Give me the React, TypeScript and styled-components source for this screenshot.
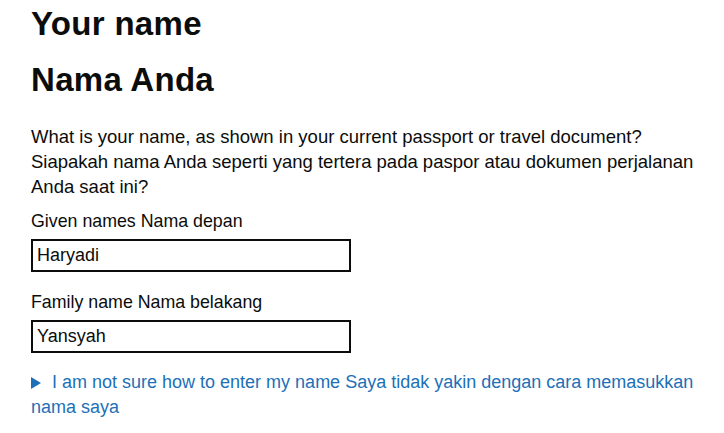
import styled, { createGlobalStyle } from 'styled-components';

const GlobalStyle = createGlobalStyle`
  html, body {
    margin: 0;
    padding: 0;
    background: #ffffff;
  }
  body {
    font-family: "Liberation Sans", Arial, sans-serif;
    color: #0b0c0c;
  }
`;

const Page = styled.main`
  padding: 4px 20px 20px 31px;
`;

const Heading = styled.h1`
  margin: 0 0 16px;
  font-size: 33px;
  line-height: 40px;
  font-weight: 700;
  letter-spacing: 0.3px;
`;

const Hint = styled.p`
  margin: 24px 0 10px;
  font-size: 18.5px;
  line-height: 25px;
`;

const Field = styled.div`
  display: flex;
  flex-direction: column;
  gap: 5px;

  & + & {
    margin-top: 18px;
  }
`;

const Label = styled.label`
  font-size: 17.8px;
  line-height: 25px;
`;

const Input = styled.input`
  box-sizing: border-box;
  width: 320px;
  height: 33px;
  margin: 0;
  padding: 0 4px;
  border: 2px solid #0b0c0c;
  border-radius: 0;
  font-family: "Liberation Sans", Arial, sans-serif;
  font-size: 18px;
  color: #0b0c0c;
  background: #ffffff;
  outline: none;
`;

const Details = styled.details`
  margin-top: 17px;
  font-size: 18px;
  line-height: 25px;
`;

const Summary = styled.summary`
  display: block;
  color: #1d70b8;
  cursor: pointer;
  list-style: none;
  &::-webkit-details-marker {
    display: none;
  }
`;

const Arrow = styled.span`
  display: inline-block;
  width: 0;
  height: 0;
  margin: 0 11px 0 0;
  border-style: solid;
  border-width: 6px 0 6px 10px;
  border-color: transparent transparent transparent #1d70b8;
  vertical-align: -1px;
`;

export default function App() {
  return (
    <>
      <GlobalStyle />
      <Page>
        <Heading>Your name</Heading>
        <Heading>Nama Anda</Heading>
        <Hint>
          What is your name, as shown in your current passport or travel document?
          <br />
          Siapakah nama Anda seperti yang tertera pada paspor atau dokumen perjalanan
          Anda saat ini?
        </Hint>
        <Field>
          <Label htmlFor="given">Given names Nama depan</Label>
          <Input id="given" defaultValue="Haryadi" />
        </Field>
        <Field>
          <Label htmlFor="family">Family name Nama belakang</Label>
          <Input id="family" defaultValue="Yansyah" />
        </Field>
        <Details>
          <Summary>
            <Arrow />
            I am not sure how to enter my name Saya tidak yakin dengan cara memasukkan
            nama saya
          </Summary>
        </Details>
      </Page>
    </>
  );
}
